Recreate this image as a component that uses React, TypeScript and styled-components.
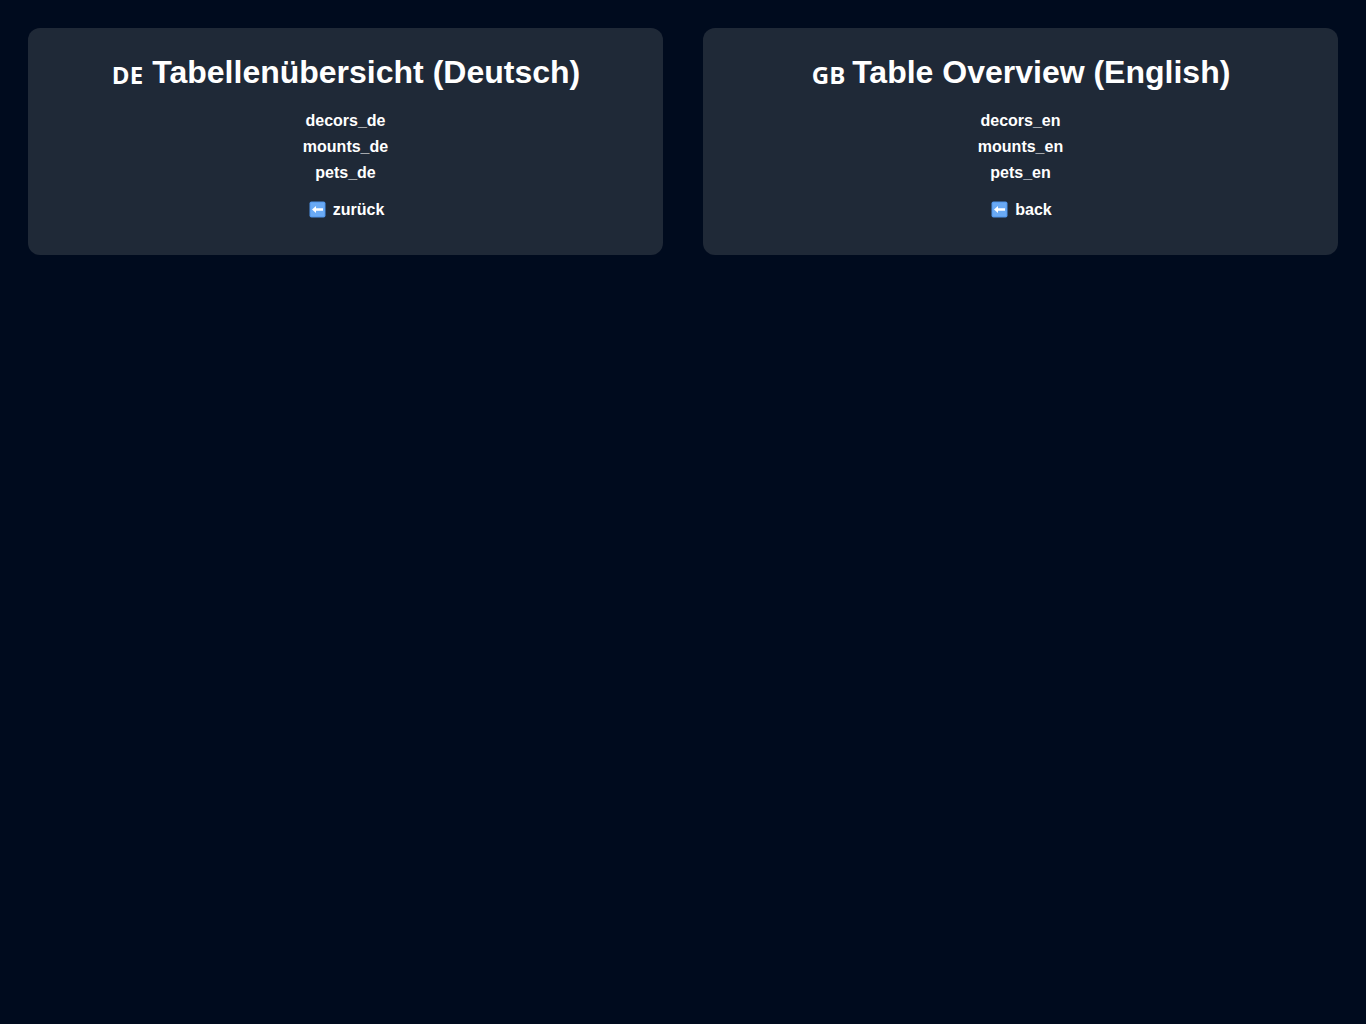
import React from 'react';
import styled, { createGlobalStyle } from 'styled-components';

const GlobalStyle = createGlobalStyle`
  html, body {
    margin: 0;
    min-height: 100%;
    background: #000b1e;
  }
  body {
    color: #fff;
    font-family: Arial, "Liberation Sans", sans-serif;
  }
`;

const sections = [
  {
    flag: 'DE',
    title: 'Tabellenübersicht (Deutsch)',
    tables: ['decors_de', 'mounts_de', 'pets_de'],
    back: 'zurück',
  },
  {
    flag: 'GB',
    title: 'Table Overview (English)',
    tables: ['decors_en', 'mounts_en', 'pets_en'],
    back: 'back',
  },
];

const BackArrow: React.FC = () => (
  <ArrowIcon viewBox="0 0 17 17" aria-hidden="true">
    <rect x="0.5" y="0.5" width="16" height="16" rx="2" fill="#4f94ea" />
    <rect x="1.5" y="1.5" width="14" height="14" rx="1" fill="#6aaaf5" />
    <path d="M3 8.5 7 5v2.3h7v2.4H7V12z" fill="#fff" />
  </ArrowIcon>
);

const App: React.FC = () => (
  <>
    <GlobalStyle />
    <Page>
      {sections.map((section) => (
        <Card key={section.title}>
          <Title>
            <Flag>{section.flag}</Flag>
            {section.title}
          </Title>
          <TableList>
            {section.tables.map((table) => (
              <li key={table}>
                <TableLink href="#">{table}</TableLink>
              </li>
            ))}
          </TableList>
          <BackLink href="#">
            <BackArrow />
            {section.back}
          </BackLink>
        </Card>
      ))}
    </Page>
  </>
);

export default App;

const Page = styled.main`
  display: grid;
  grid-template-columns: 635px 635px;
  gap: 40px;
  align-items: start;
  padding: 28px;
`;

const Card = styled.section`
  height: 227px;
  box-sizing: border-box;
  padding: 24px;
  border-radius: 12px;
  background: #1f2937;
  text-align: center;
`;

const Title = styled.h2`
  margin: 0 0 16px;
  font-size: 32px;
  line-height: 40px;
  font-weight: 700;
`;

const Flag = styled.span`
  display: inline-block;
  box-sizing: border-box;
  width: 32px;
  padding-left: 1px;
  margin-right: 9.5px;
  font-family: "Open Sans", "Noto Sans", sans-serif;
  font-size: 24px;
  font-weight: 700;
  letter-spacing: 0.2px;
  line-height: 1;
  text-align: center;
  vertical-align: -1px;
`;

const TableList = styled.ul`
  margin: 0;
  padding: 0;
  list-style: none;
  font-size: 16px;
  line-height: 26px;
`;

const TableLink = styled.a`
  color: #fff;
  font-weight: 700;
  text-decoration: none;
`;

const BackLink = styled(TableLink)`
  display: inline-flex;
  align-items: center;
  gap: 7px;
  margin-top: 12px;
  line-height: 24px;
`;

const ArrowIcon = styled.svg`
  width: 17px;
  height: 17px;
  flex: none;
  margin: 0 0 2px 2px;
`;
